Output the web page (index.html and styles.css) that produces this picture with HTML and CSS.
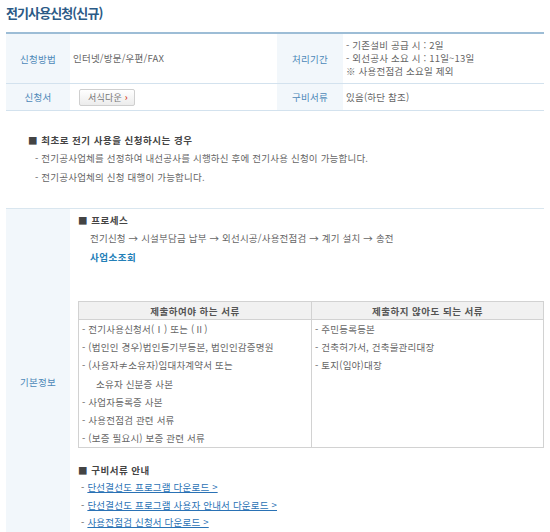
FILE: index.html
```html
<!DOCTYPE html>
<html lang="ko">
<head>
  <meta charset="UTF-8" />
  <title>전기사용신청(신규)</title>
  <link rel="stylesheet" href="styles.css">
</head>
<body>
  <h1 class="title">전기사용신청(신규)</h1>

  <table class="info">
    <colgroup>
      <col class="c-label"><col class="c-value"><col class="c-label2"><col>
    </colgroup>
    <tr class="row-tall">
      <th>신청방법</th>
      <td>인터넷/방문/우편/FAX</td>
      <th>처리기간</th>
      <td>
        - 기존설비 공급 시 : 2일<br>
        - 외선공사 소요 시 : 11일~13일<br>
        ※ 사용전점검 소요일 제외
      </td>
    </tr>
    <tr>
      <th>신청서</th>
      <td><span class="btn">서식다운 <b>›</b></span></td>
      <th>구비서류</th>
      <td>있음(하단 참조)</td>
    </tr>
  </table>

  <div class="notice">
    <p class="sq-title">■ 최초로 전기 사용을 신청하시는 경우</p>
    <p class="dash">- 전기공사업체를 선정하여 내선공사를 시행하신 후에 전기사용 신청이 가능합니다.</p>
    <p class="dash">- 전기공사업체의 신청 대행이 가능합니다.</p>
  </div>

  <table class="basic">
    <tr>
      <th>기본정보</th>
      <td>
        <p class="sq-title">■ 프로세스</p>
        <p class="process">전기신청 → 시설부담금 납부 → 외선시공/사용전점검 → 계기 설치 → 송전</p>
        <p class="process"><a class="office">사업소조회</a></p>

        <table class="docs">
          <tr>
            <th>제출하여야 하는 서류</th>
            <th>제출하지 않아도 되는 서류</th>
          </tr>
          <tr>
            <td>
              <p>- 전기사용신청서(Ⅰ) 또는 (Ⅱ)</p>
              <p>- (법인인 경우)법인등기부등본, 법인인감증명원</p>
              <p>- (사용자≠소유자)임대차계약서 또는</p>
              <p class="indent">소유자 신분증 사본</p>
              <p>- 사업자등록증 사본</p>
              <p>- 사용전점검 관련 서류</p>
              <p>- (보증 필요시) 보증 관련 서류</p>
            </td>
            <td>
              <p>- 주민등록등본</p>
              <p>- 건축허가서, 건축물관리대장</p>
              <p>- 토지(임야)대장</p>
            </td>
          </tr>
        </table>

        <p class="sq-title guide">■ 구비서류 안내</p>
        <p class="link">- <a>단선결선도 프로그램 다운로드 &gt;</a></p>
        <p class="link">- <a>단선결선도 프로그램 사용자 안내서 다운로드 &gt;</a></p>
        <p class="link">- <a>사용전점검 신청서 다운로드 &gt;</a></p>
      </td>
    </tr>
  </table>
</body>
</html>
```

FILE: styles.css
```css
body {
  margin: 0;
  padding: 3px 6px 0 6px;
  font-family: "Noto Sans CJK KR", "Noto Sans", sans-serif;
  font-size: 9.5px;
  letter-spacing: 0.2px;
  color: #666;
  background: #fff;
}
p {
  margin: 0;
}
.title {
  margin: 0 0 10px 0;
  font-size: 13px;
  line-height: 19px;
  font-weight: bold;
  letter-spacing: -0.9px;
  color: #2b5a86;
}
table {
  border-collapse: collapse;
}
.info {
  width: 538px;
  border-top: 2px solid #9dbdd6;
}
.info col.c-label { width: 64px; }
.info col.c-value { width: 207px; }
.info col.c-label2 { width: 66px; }
.info th {
  background: #f2f7fb;
  color: #4d88b8;
  font-weight: normal;
  text-align: center;
  border-bottom: 1px solid #d3e2ee;
  height: 26px;
  padding: 0;
}
.info td {
  border-bottom: 1px solid #d3e2ee;
  padding: 0 0 0 3px;
  line-height: 13px;
  height: 26px;
}
.info .row-tall th,
.info .row-tall td {
  height: 49px;
}
.btn {
  display: inline-block;
  margin-left: 6px;
  padding: 0 6px 0 8px;
  line-height: 15px;
  border: 1px solid #cfcfcf;
  border-radius: 2px;
  background: linear-gradient(#fff, #ececec);
  color: #777;
  font-size: 9px;
}
.btn b {
  color: #d9442c;
}
.notice {
  padding: 21px 0 0 22px;
  height: 76px;
}
.sq-title {
  font-weight: bold;
  color: #444;
  line-height: 17px;
  letter-spacing: 0.5px;
}
.dash {
  padding-left: 7px;
  line-height: 19px;
}
.basic {
  width: 538px;
  border-top: 1px solid #d9e6ef;
}
.basic > tbody > tr > th {
  width: 64px;
  background: #f2f7fb;
  color: #4d88b8;
  font-weight: normal;
  vertical-align: middle;
  padding: 0;
  height: 345px;
}
.basic > tbody > tr > td {
  vertical-align: top;
  padding: 3px 0 0 8px;
}
.process {
  padding-left: 12px;
  line-height: 19px;
}
.office {
  color: #2480b8;
  font-weight: bold;
  letter-spacing: 0.5px;
}
.docs {
  width: 466px;
  margin-top: 34px;
  border: 1px solid #d2d2d2;
}
.docs th {
  background: #f1f1f1;
  color: #555;
  height: 17px;
  padding: 0;
  border: 1px solid #d2d2d2;
  letter-spacing: 0.5px;
}
.docs th:first-child {
  width: 232px;
}
.docs td {
  vertical-align: top;
  border: 1px solid #d2d2d2;
  padding: 0 0 0 3px;
}
.docs td p {
  line-height: 18.2px;
}
.docs td p.indent {
  padding-left: 14px;
}
.guide {
  margin-top: 14px;
}
.link {
  padding-left: 3px;
  line-height: 17.5px;
}
.link a {
  color: #2a72b5;
  text-decoration: underline;
}
```
